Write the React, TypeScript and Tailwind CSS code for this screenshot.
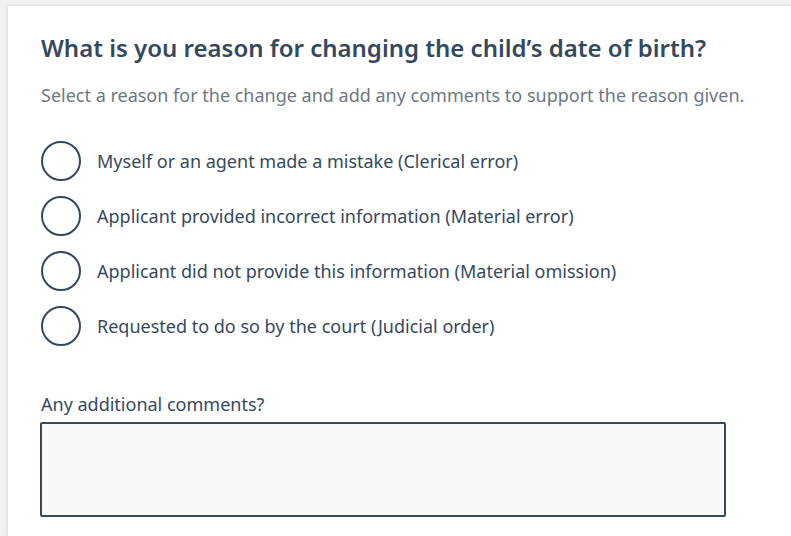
const reasons = [
  'Myself or an agent made a mistake (Clerical error)',
  'Applicant provided incorrect information (Material error)',
  'Applicant did not provide this information (Material omission)',
  'Requested to do so by the court (Judicial order)',
];

export default function App() {
  return (
    <div
      className="min-h-[536px] w-[791px] overflow-hidden bg-[#f0f1f3] pl-[8px] pt-[6px]"
      style={{ fontFamily: '"Noto Sans", sans-serif' }}
    >
      <div className="min-h-[530px] w-[800px] bg-white pl-[33px] pt-[26px] shadow-[0_0_4px_rgba(0,0,0,0.12)]">
        <h1 className="text-[24px] leading-[32px] font-semibold text-[#35495e]">
          What is you reason for changing the child’s date of birth?
        </h1>
        <p className="mt-[19px] text-[18px] leading-[24px] text-[#6d7882]">
          Select a reason for the change and add any comments to support the reason given.
        </p>

        <div className="mt-[34px] flex flex-col gap-[15px]">
          {reasons.map((r) => (
            <label key={r} className="flex items-center gap-[16px] cursor-pointer">
              <span className="h-[40px] w-[40px] shrink-0 rounded-full border-2 border-[#35495e] bg-white" />
              <span className="text-[18px] leading-[24px] text-[#35495e]">{r}</span>
            </label>
          ))}
        </div>

        <p className="mt-[46px] text-[18px] leading-[24px] text-[#35495e]">Any additional comments?</p>
        <textarea className="mt-[6px] block h-[95px] w-[686px] resize-none rounded-[2px] border-2 border-[#35495e] bg-[#f8f8f8] -ml-px" />
      </div>
    </div>
  );
}
